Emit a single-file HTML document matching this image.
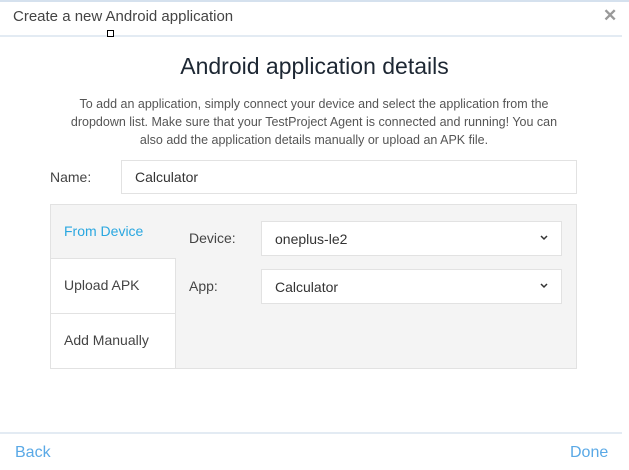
<!DOCTYPE html>
<html><head><style>
*{margin:0;padding:0;box-sizing:border-box}
body{width:629px;height:470px;background:#fff;font-family:"Liberation Sans",sans-serif;position:relative;overflow:hidden;color:#333}
.a{position:absolute}
.sel{position:absolute;background:#fff;border:1px solid #e2e2e2;font-size:14px;color:#333;padding-left:13px;display:flex;align-items:center}
.chev{position:absolute;right:12px;top:12px}
</style></head><body>
<div class="a" style="left:0;top:0;width:629px;height:2px;background:#d5e1ee"></div>
<div class="a" style="left:13px;top:8px;font-size:15px;color:#444">Create a new Android application</div>
<div class="a" style="left:603px;top:6px;font-size:17px;color:#999;font-weight:bold">✕</div>
<div class="a" style="left:0;top:35px;width:622px;height:2px;background:#e3ebf3"></div>
<div class="a" style="left:107px;top:30px;width:7px;height:7px;border:1px solid #000;background:#fff"></div>
<div class="a" style="left:0;top:53px;width:629px;text-align:center;font-size:23px;color:#1d2733">Android application details</div>
<div class="a" style="left:62px;top:95px;width:504px;text-align:center;font-size:12.5px;line-height:18px;color:#555">To add an application, simply connect your device and select the application from the dropdown list. Make sure that your TestProject Agent is connected and running! You can also add the application details manually or upload an APK file.</div>
<div class="a" style="left:50px;top:169px;font-size:14px;color:#444">Name:</div>
<div class="sel" style="left:121px;top:160px;width:456px;height:34px">Calculator</div>
<div class="a" style="left:50px;top:204px;width:527px;height:165px;background:#f4f4f4;border:1px solid #e2e2e2"></div>
<div class="a" style="left:64px;top:223px;font-size:14px;color:#2aa7e0">From Device</div>
<div class="a" style="left:50px;top:258px;width:126px;height:56px;background:#fff;border:1px solid #e2e2e2"></div>
<div class="a" style="left:64px;top:277px;font-size:14px;color:#444">Upload APK</div>
<div class="a" style="left:50px;top:313px;width:126px;height:56px;background:#fff;border:1px solid #e2e2e2"></div>
<div class="a" style="left:64px;top:332px;font-size:14px;color:#444">Add Manually</div>
<div class="a" style="left:189px;top:230px;font-size:14px;color:#444">Device:</div>
<div class="sel" style="left:261px;top:221px;width:301px;height:35px">oneplus-le2<svg class="chev" width="10" height="8" viewBox="0 0 10 8"><path d="M2 2l3 3 3-3" stroke="#333" stroke-width="1.5" fill="none"/></svg></div>
<div class="a" style="left:189px;top:278px;font-size:14px;color:#444">App:</div>
<div class="sel" style="left:261px;top:269px;width:301px;height:35px">Calculator<svg class="chev" width="10" height="8" viewBox="0 0 10 8"><path d="M2 2l3 3 3-3" stroke="#333" stroke-width="1.5" fill="none"/></svg></div>
<div class="a" style="left:0;top:432px;width:622px;height:2px;background:#e3ebf3"></div>
<div class="a" style="left:15px;top:444px;font-size:16px;color:#5aa9e6">Back</div>
<div class="a" style="left:570px;top:444px;font-size:16px;color:#5aa9e6">Done</div>
</body></html>
